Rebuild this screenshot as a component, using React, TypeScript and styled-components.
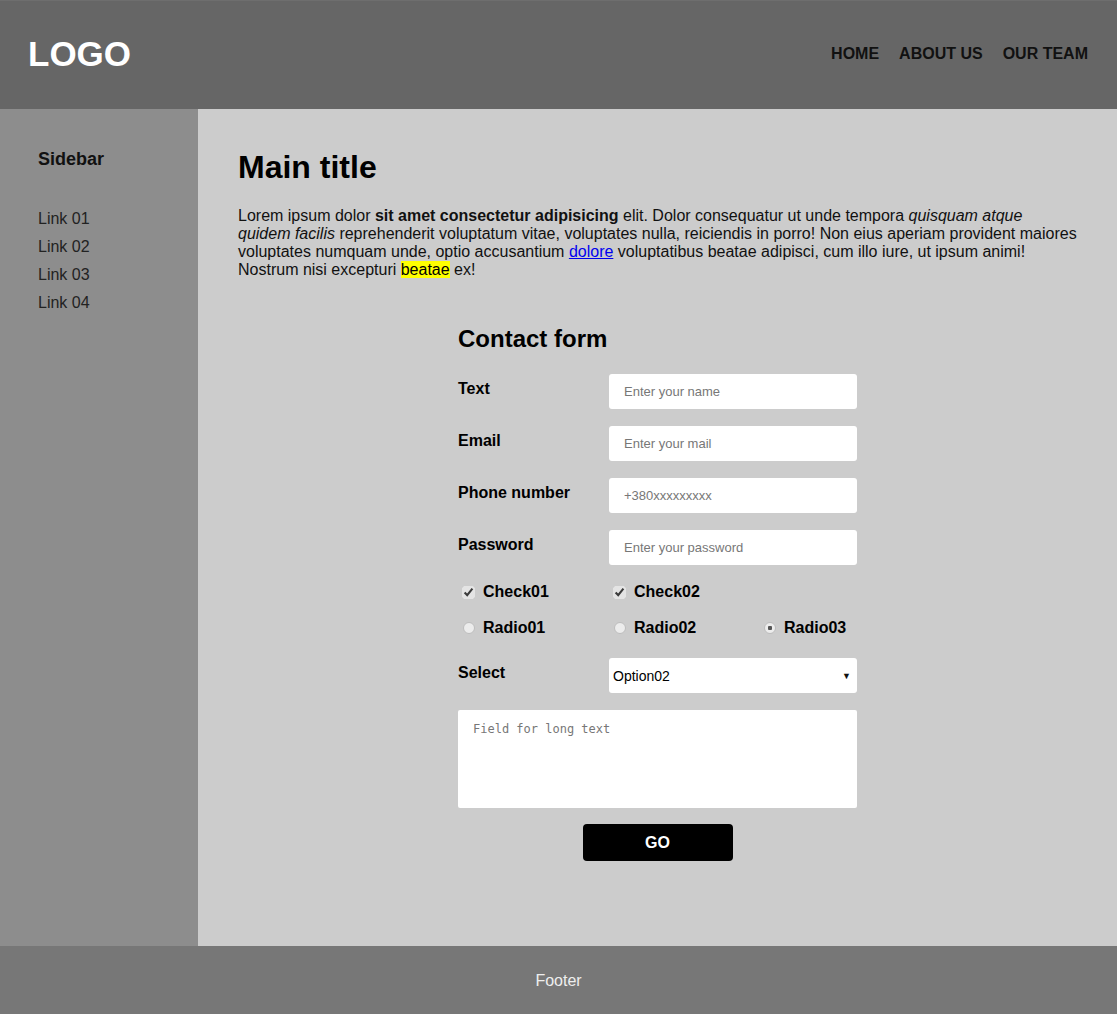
import React from 'react';
import styled, { createGlobalStyle } from 'styled-components';

const GlobalStyle = createGlobalStyle`
  html, body {
    margin: 0;
    padding: 0;
  }
  body {
    font-family: 'Liberation Sans', Arial, sans-serif;
    color: #111;
  }
  * {
    box-sizing: border-box;
  }
`;

const Page = styled.div`
  min-height: 100vh;
  display: flex;
  flex-direction: column;
`;

const Header = styled.header`
  height: 109px;
  background-color: #666;
  border-top: 1px solid #6e6e6e;
  display: flex;
  justify-content: space-between;
  align-items: center;
  padding: 0 29px 2px 28px;
`;

const Logo = styled.div`
  font-size: 35px;
  font-weight: 700;
  color: #fff;
`;

const Nav = styled.nav`
  display: flex;
  gap: 20px;
`;

const NavLink = styled.a`
  font-size: 16px;
  font-weight: 700;
  color: #111;
  text-decoration: none;
`;

const Middle = styled.div`
  flex: 1;
  display: flex;
`;

const Sidebar = styled.aside`
  width: 198px;
  flex-shrink: 0;
  background-color: #8d8d8d;
  padding: 40px 38px;
`;

const SidebarTitle = styled.h3`
  margin: 0 0 35px;
  font-size: 18px;
  font-weight: 700;
  color: #111;
`;

const SideLinks = styled.ul`
  list-style: none;
  margin: 0;
  padding: 0;
`;

const SideLink = styled.li`
  font-size: 16px;
  line-height: 28px;
  color: #222;
`;

const Content = styled.main`
  flex: 1;
  background-color: #ccc;
  padding: 40px 40px 85px;
`;

const Title = styled.h1`
  margin: 0 0 21px;
  font-size: 32px;
  font-weight: 700;
  color: #000;
`;

const Text = styled.p`
  margin: 0;
  font-size: 16px;
  color: #111;
`;

const Link = styled.a`
  color: #0000ee;
  text-decoration: underline;
`;

const Highlight = styled.mark`
  background-color: #ffff00;
  color: #000;
`;

const Form = styled.form`
  width: 399px;
  margin: 46px auto 0;
  display: flex;
  flex-direction: column;
`;

const FormTitle = styled.h2`
  margin: 0 0 21px;
  font-size: 24px;
  font-weight: 700;
  color: #000;
`;

const FieldRow = styled.div<{ $top?: number }>`
  display: grid;
  grid-template-columns: 151px 248px;
  align-items: start;
  margin-top: ${p => p.$top ?? 0}px;
`;

const Label = styled.label`
  font-size: 16px;
  font-weight: 700;
  color: #000;
  padding-top: 6px;
`;

const Input = styled.input`
  height: 35px;
  width: 100%;
  border: none;
  border-radius: 3px;
  background: #fff;
  padding: 0 15px;
  font-family: 'Liberation Sans', Arial, sans-serif;
  font-size: 13px;
  outline: none;
  &::placeholder {
    color: #777;
  }
`;

const ChoiceRow = styled.div<{ $top: number }>`
  display: grid;
  grid-template-columns: 151px 150px 1fr;
  margin-top: ${p => p.$top}px;
  height: 20px;
`;

const Choice = styled.label`
  display: inline-flex;
  align-items: center;
  font-size: 16px;
  font-weight: 700;
  color: #000;
`;

const CheckBox = styled.input`
  width: 13px;
  height: 13px;
  margin: 0 8px 0 4px;
  accent-color: #e4e4e4;
`;

const Radio = styled.input`
  appearance: none;
  width: 12px;
  height: 12px;
  margin: 0 8px 0 5px;
  border-radius: 50%;
  border: 1px solid #bdbdbd;
  background: #ececec;
  &:checked {
    background: radial-gradient(circle, #555 0 2px, #ececec 2.5px);
  }
`;

const SelectWrap = styled.div`
  position: relative;
  height: 35px;
`;

const Select = styled.select`
  appearance: none;
  width: 100%;
  height: 35px;
  border: none;
  border-radius: 3px;
  background: #fff;
  padding: 0 4px;
  font-family: 'Liberation Sans', Arial, sans-serif;
  font-size: 14px;
  color: #000;
  outline: none;
`;

const Arrow = styled.span`
  position: absolute;
  right: 6px;
  top: 50%;
  transform: translateY(-50%);
  font-size: 9px;
  color: #111;
  pointer-events: none;
`;

const TextArea = styled.textarea`
  margin-top: 17px;
  height: 98px;
  width: 100%;
  border: none;
  border-radius: 2px;
  background: #fff;
  padding: 12px 15px;
  resize: none;
  font-family: 'DejaVu Sans Mono', 'Liberation Mono', monospace;
  font-size: 12px;
  outline: none;
  &::placeholder {
    color: #777;
  }
`;

const Button = styled.button`
  margin: 16px auto 0;
  width: 150px;
  height: 37px;
  border: none;
  border-radius: 4px;
  background: #000;
  color: #fff;
  font-family: 'Liberation Sans', Arial, sans-serif;
  font-size: 16px;
  font-weight: 700;
  cursor: pointer;
`;

const Footer = styled.footer`
  height: 68px;
  background-color: #777;
  display: flex;
  justify-content: center;
  align-items: center;
  padding-top: 1px;
  font-size: 16px;
  color: #eee;
`;

export default function App() {
  return (
    <>
      <GlobalStyle />
      <Page>
        <Header>
          <Logo>LOGO</Logo>
          <Nav>
            <NavLink href="#">HOME</NavLink>
            <NavLink href="#">ABOUT US</NavLink>
            <NavLink href="#">OUR TEAM</NavLink>
          </Nav>
        </Header>
        <Middle>
          <Sidebar>
            <SidebarTitle>Sidebar</SidebarTitle>
            <SideLinks>
              <SideLink>Link 01</SideLink>
              <SideLink>Link 02</SideLink>
              <SideLink>Link 03</SideLink>
              <SideLink>Link 04</SideLink>
            </SideLinks>
          </Sidebar>
          <Content>
            <Title>Main title</Title>
            <Text>
              Lorem ipsum dolor <b>sit amet consectetur adipisicing</b> elit. Dolor consequatur ut unde
              tempora <i>quisquam atque quidem facilis</i> reprehenderit voluptatum vitae, voluptates
              nulla, reiciendis in porro! Non eius aperiam provident maiores voluptates numquam unde,
              optio accusantium <Link href="#">dolore</Link> voluptatibus beatae adipisci, cum illo
              iure, ut ipsum animi! Nostrum nisi excepturi <Highlight>beatae</Highlight> ex!
            </Text>
            <Form onSubmit={e => e.preventDefault()}>
              <FormTitle>Contact form</FormTitle>
              <FieldRow>
                <Label htmlFor="name">Text</Label>
                <Input id="name" type="text" placeholder="Enter your name" />
              </FieldRow>
              <FieldRow $top={17}>
                <Label htmlFor="mail">Email</Label>
                <Input id="mail" type="email" placeholder="Enter your mail" />
              </FieldRow>
              <FieldRow $top={17}>
                <Label htmlFor="phone">Phone number</Label>
                <Input id="phone" type="tel" placeholder="+380xxxxxxxxx" />
              </FieldRow>
              <FieldRow $top={17}>
                <Label htmlFor="pass">Password</Label>
                <Input id="pass" type="password" placeholder="Enter your password" />
              </FieldRow>
              <ChoiceRow $top={17}>
                <Choice>
                  <CheckBox type="checkbox" defaultChecked />
                  Check01
                </Choice>
                <Choice>
                  <CheckBox type="checkbox" defaultChecked />
                  Check02
                </Choice>
              </ChoiceRow>
              <ChoiceRow $top={16}>
                <Choice>
                  <Radio type="radio" name="radio" />
                  Radio01
                </Choice>
                <Choice>
                  <Radio type="radio" name="radio" />
                  Radio02
                </Choice>
                <Choice>
                  <Radio type="radio" name="radio" defaultChecked />
                  Radio03
                </Choice>
              </ChoiceRow>
              <FieldRow $top={20}>
                <Label htmlFor="sel">Select</Label>
                <SelectWrap>
                  <Select id="sel" defaultValue="2">
                    <option value="1">Option01</option>
                    <option value="2">Option02</option>
                    <option value="3">Option03</option>
                  </Select>
                  <Arrow>▼</Arrow>
                </SelectWrap>
              </FieldRow>
              <TextArea placeholder="Field for long text" />
              <Button type="submit">GO</Button>
            </Form>
          </Content>
        </Middle>
        <Footer>Footer</Footer>
      </Page>
    </>
  );
}
